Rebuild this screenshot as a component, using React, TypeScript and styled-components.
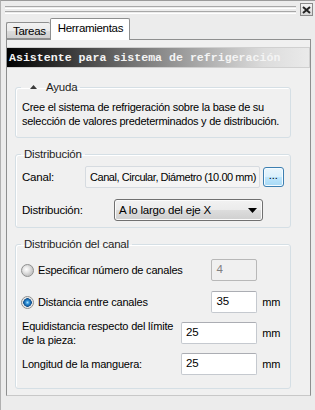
import React from 'react';
import styled, { createGlobalStyle } from 'styled-components';

const GlobalStyle = createGlobalStyle`
  html, body {
    margin: 0;
    padding: 0;
    background: #f0f0f0;
  }
  body {
    font-family: 'Liberation Sans', Arial, sans-serif;
    font-size: 11px;
    color: #000;
  }
`;

export default function App() {
  return (
    <Frame>
      <GlobalStyle />
      <TitleBar>
        <Grip>
          <GripLine />
          <GripLine />
        </Grip>
        <CloseButton title="Cerrar">
          <svg width="9" height="8" viewBox="0 0 9 8">
            <path d="M1 1 L8 7 M8 1 L1 7" stroke="#222" strokeWidth="2" />
          </svg>
        </CloseButton>
      </TitleBar>

      <TabStrip>
        <Tab>Tareas</Tab>
        <Tab active>Herramientas</Tab>
      </TabStrip>

      <TabPanel>
        <Banner>Asistente para sistema de refrigeración</Banner>

        <Group bottom={9}>
          <Legend>
            <svg width="7" height="4" viewBox="0 0 7 4" style={{ margin: '0 9px 0 6px' }}>
              <path d="M3.5 0 L7 4 H0 Z" fill="#3a3a3a" />
            </svg>
            Ayuda
          </Legend>
          <HelpText>
            Cree el sistema de refrigeración sobre la base de su
            <br />
            selección de valores predeterminados y de distribución.
          </HelpText>
        </Group>

        <Group bottom={6}>
          <Legend>Distribución</Legend>
          <FormRow top={5}>
            <Label width={63}>Canal:</Label>
            <ReadField>Canal, Circular, Diámetro (10.00 mm)</ReadField>
            <BrowseButton>...</BrowseButton>
          </FormRow>
          <FormRow top={11}>
            <Label width={92}>Distribución:</Label>
            <Select>
              <span>A lo largo del eje X</span>
              <svg width="9" height="5" viewBox="0 0 9 5">
                <path d="M0 0 H9 L4.5 5 Z" fill="#000" />
              </svg>
            </Select>
          </FormRow>
        </Group>

        <Group bottom={13}>
          <Legend>Distribución del canal</Legend>
          <FormRow top={8}>
            <RadioLabel>
              <Radio />
              Especificar número de canales
            </RadioLabel>
            <NumField disabled>4</NumField>
            <Unit />
          </FormRow>
          <FormRow top={10}>
            <RadioLabel>
              <Radio checked />
              Distancia entre canales
            </RadioLabel>
            <NumField>35</NumField>
            <Unit>mm</Unit>
          </FormRow>
          <FormRow top={6}>
            <WrapLabel>Equidistancia respecto del límite de la pieza:</WrapLabel>
            <NumField wide>25</NumField>
            <Unit>mm</Unit>
          </FormRow>
          <FormRow top={6}>
            <WrapLabel>Longitud de la manguera:</WrapLabel>
            <NumField wide>25</NumField>
            <Unit>mm</Unit>
          </FormRow>
        </Group>
      </TabPanel>
    </Frame>
  );
}

const Frame = styled.div`
  width: 315px;
  height: 410px;
  box-sizing: border-box;
  border-top: 1px solid #9a9a9a;
  border-left: 1px solid #b0b0b0;
  padding-left: 5px;
  padding-right: 2px;
  background: #ececec;
  overflow: hidden;
`;

const TitleBar = styled.div`
  display: flex;
  align-items: center;
  height: 17px;
  margin-left: -1px;
`;

const Grip = styled.div`
  flex: 1;
  display: flex;
  flex-direction: column;
  gap: 2px;
  margin-right: 4px;
`;

const GripLine = styled.div`
  height: 1px;
  border-top: 1px solid #a8a8a8;
  border-bottom: 1px solid #ffffff;
`;

const CloseButton = styled.div`
  width: 11px;
  height: 11px;
  display: flex;
  align-items: center;
  justify-content: center;
  border: 1px solid #8a8a8a;
  background: linear-gradient(#f4f4f4, #d8d8d8);
`;

const TabStrip = styled.div`
  display: flex;
  align-items: flex-end;
  height: 21px;
  position: relative;
  z-index: 1;
`;

const Tab = styled.div<{ active?: boolean }>`
  box-sizing: border-box;
  height: ${(p) => (p.active ? 22 : 17)}px;
  margin-bottom: ${(p) => (p.active ? -1 : 0)}px;
  padding: ${(p) => (p.active ? '3px 6px 0 7px' : '2px 4px 0 6px')};
  border: 1px solid #8e8f8f;
  border-bottom: ${(p) => (p.active ? 'none' : '1px solid #8e8f8f')};
  border-right: ${(p) => (p.active ? '1px solid #8e8f8f' : 'none')};
  border-radius: 2px 2px 0 0;
  background: ${(p) =>
    p.active ? '#ffffff' : 'linear-gradient(#f2f2f2 0%, #ebebeb 50%, #dddddd 51%, #cfcfcf 100%)'};
  font-size: 11.5px;
  line-height: 13px;
  letter-spacing: -0.3px;
  white-space: nowrap;
`;

const TabPanel = styled.div`
  box-sizing: border-box;
  height: 357px;
  margin-right: 2px;
  border: 1px solid #8e8f8f;
  border-bottom-color: #c8c8c8;
  background: #f0f0f0;
  padding: 7px 0 0 0;
`;

const Banner = styled.div`
  box-sizing: border-box;
  height: 21px;
  margin-bottom: 12px;
  padding: 3px 0 0 2px;
  border: 1px solid #d0d0d0;
  border-left: none;
  background: linear-gradient(90deg, #000000 0%, #7c7c7c 45%, #dcdcdc 85%, #eaeaea 100%);
  color: #f4f4f4;
  font-family: 'Liberation Mono', 'Courier New', monospace;
  font-weight: bold;
  font-size: 11.6px;
  line-height: 14px;
  white-space: nowrap;
  overflow: hidden;
`;

const Group = styled.fieldset<{ bottom: number }>`
  margin: 0 19px 9px 8px;
  padding: 0 6px ${(p) => p.bottom}px 5px;
  border: 1px solid #d5dfe5;
  border-radius: 3px;
  min-width: 0;
  box-shadow: inset 1px 1px 0 #ffffff;
  letter-spacing: -0.2px;
`;

const Legend = styled.legend`
  margin-left: 0;
  padding: 0 3px;
  font-size: 11.5px;
  line-height: 14px;
  display: flex;
  align-items: center;
  color: #1e1e1e;
`;

const HelpText = styled.p`
  margin: 6px 0 0 1px;
  font-size: 11px;
  line-height: 14px;
  white-space: nowrap;
  letter-spacing: -0.25px;
`;

const FormRow = styled.div<{ top: number }>`
  display: flex;
  align-items: center;
  margin-top: ${(p) => p.top}px;
`;

const Label = styled.div<{ width: number }>`
  width: ${(p) => p.width}px;
  flex-shrink: 0;
  font-size: 11.5px;
  padding-left: 1px;
`;

const ReadField = styled.div`
  box-sizing: border-box;
  width: 179px;
  height: 22px;
  padding: 3px 0 0 4px;
  border: 1px solid #d6dbe0;
  border-radius: 2px;
  background: #f4f4f4;
  font-size: 11px;
  line-height: 14px;
  letter-spacing: -0.45px;
  white-space: nowrap;
  overflow: hidden;
`;

const BrowseButton = styled.div`
  box-sizing: border-box;
  width: 22px;
  height: 20px;
  margin-left: 3px;
  border: 1px solid #3c7fb1;
  border-radius: 3px;
  background: linear-gradient(#eaf6fd 0%, #d9f0fc 50%, #bee6fd 51%, #a7d9f5 100%);
  box-shadow: inset 0 0 0 1px #f4fbff;
  font-size: 11px;
  line-height: 14px;
  letter-spacing: 0;
  text-align: center;
`;

const Select = styled.div`
  box-sizing: border-box;
  width: 149px;
  height: 22px;
  display: flex;
  align-items: center;
  justify-content: space-between;
  padding: 0 5px 0 4px;
  border: 1px solid #707070;
  border-radius: 3px;
  background: linear-gradient(#f2f2f2 0%, #ebebeb 50%, #dddddd 51%, #cfcfcf 100%);
  box-shadow: inset 0 0 0 1px #fbfbfb;
  font-size: 11.5px;
`;

const RadioLabel = styled.label`
  width: 192px;
  display: flex;
  align-items: center;
  gap: 4px;
  font-size: 11px;
  white-space: nowrap;
`;

const Radio = styled.span<{ checked?: boolean }>`
  box-sizing: border-box;
  width: 13px;
  height: 13px;
  border-radius: 50%;
  border: 1px solid #8e8f8f;
  background: ${(p) =>
    p.checked
      ? 'radial-gradient(circle, #9fe0ff 0, #2a8ad4 2px, #0f4f8c 4px, #dfdfdf 4.5px, #f8f8f8 6px)'
      : 'radial-gradient(circle at 40% 40%, #ffffff 0, #e6e6e6 3px, #c8c8c8 6px)'};
  flex-shrink: 0;
`;

const WrapLabel = styled.div`
  width: 160px;
  margin-right: 1px;
  font-size: 11px;
  line-height: 14px;
  padding-left: 1px;
`;

const NumField = styled.div<{ disabled?: boolean; wide?: boolean }>`
  box-sizing: border-box;
  width: ${(p) => (p.wide ? 77 : 46)}px;
  height: 22px;
  padding: 2px 0 0 4px;
  border: 1px solid ${(p) => (p.disabled ? '#b8b8b8' : '#c5c9cf')};
  border-top-color: ${(p) => (p.disabled ? '#b8b8b8' : '#abadb3')};
  border-radius: 2px;
  background: ${(p) => (p.disabled ? '#f0f0f0' : '#ffffff')};
  color: ${(p) => (p.disabled ? '#808080' : '#000')};
  font-size: 11.5px;
  line-height: 14px;
`;

const Unit = styled.span`
  width: 22px;
  margin-left: 5px;
  font-size: 11px;
`;
